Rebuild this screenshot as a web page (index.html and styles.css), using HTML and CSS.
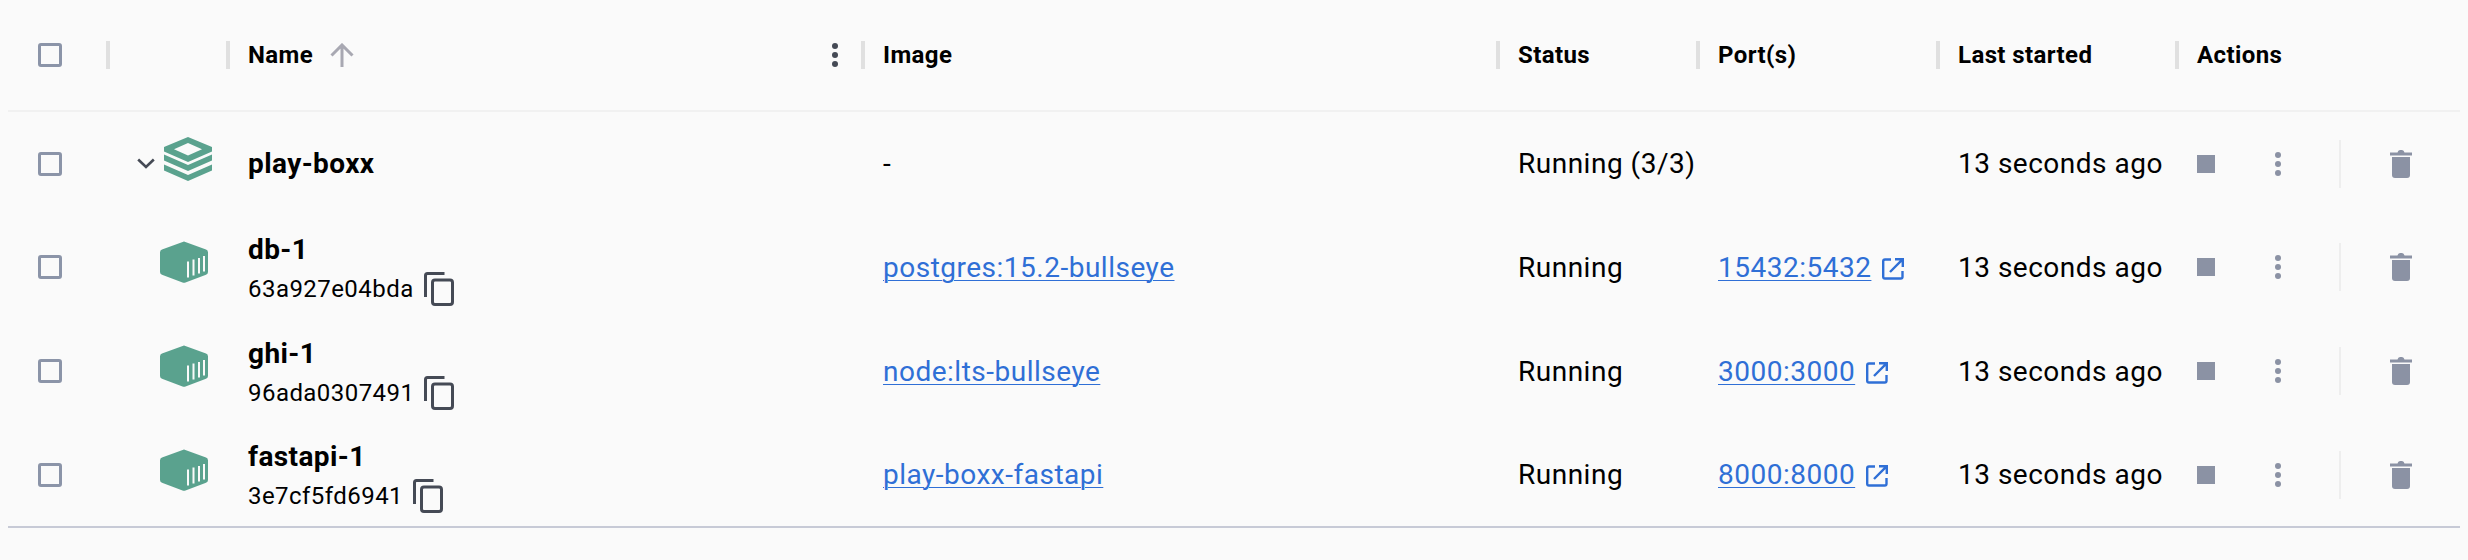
FILE: index.html
```html
<!DOCTYPE html>
<html lang="en">
<head>
    <meta charset="UTF-8">
    <title>Containers</title>
    <link rel="stylesheet" href="styles.css">
</head>
<body>
    <svg class="defs" width="0" height="0">
        <symbol id="i-box" viewBox="0 0 48 42">
            <path d="M24 0.5 46 8.5Q48 9.2 48 11.5V31Q48 33 46 33.8L25.5 41.5Q24 42 22.5 41.5L2 33.8Q0 33 0 31V11.5Q0 9.2 2 8.5Z" fill="#5aa28e"/>
            <path d="M28 20.5V36.5M33.5 18.5V34.5M39 17V32.5M44 15V30.5" stroke="#fafafa" stroke-width="2" fill="none"/>
        </symbol>
        <symbol id="i-copy" viewBox="0 0 30 34">
            <path d="M1.5 25V3.5Q1.5 1.5 3.5 1.5H20.5" stroke="#454a55" stroke-width="3" fill="none"/>
            <rect x="8.5" y="8" width="20" height="24.5" rx="2.5" stroke="#454a55" stroke-width="3" fill="none"/>
        </symbol>
        <symbol id="i-open" viewBox="0 0 22 22">
            <path d="M9 1.5H3Q1.2 1.5 1.2 3.3V18.7Q1.2 20.5 3 20.5H18.7Q20.5 20.5 20.5 18.7V13M13 1.2H20.8V9M20.3 1.7 8 14" stroke="#2f6fd6" stroke-width="2.4" fill="none"/>
        </symbol>
        <symbol id="i-dots" viewBox="0 0 6 24">
            <circle cx="3" cy="3" r="3"/>
            <circle cx="3" cy="12" r="3"/>
            <circle cx="3" cy="21" r="3"/>
        </symbol>
        <symbol id="i-trash" viewBox="0 0 22 28">
            <path d="M0 2.5H7.5Q8 0 10 0H12Q14 0 14.5 2.5H22V5.5H0Z" fill="#8b92a4"/>
            <path d="M2 7H20V25Q20 28 17 28H5Q2 28 2 25Z" fill="#8b92a4"/>
        </symbol>
    </svg>

    <table class="containers">
        <colgroup>
            <col class="col-check">
            <col class="col-icon">
            <col class="col-name">
            <col class="col-image">
            <col class="col-status">
            <col class="col-ports">
            <col class="col-started">
            <col class="col-actions">
        </colgroup>
        <thead>
            <tr>
                <th><span class="checkbox"></span></th>
                <th class="sep"></th>
                <th class="sep">
                    <div class="name-head">
                        <span>Name</span>
                        <svg class="sort-arrow" width="24" height="24" viewBox="0 0 24 24"><path d="M12 24V2M1.5 12.5 12 2 22.5 12.5" stroke="#a8a8b2" stroke-width="3" fill="none"/></svg>
                        <svg class="head-menu" width="6" height="24"><use href="#i-dots"/></svg>
                    </div>
                </th>
                <th class="sep">Image</th>
                <th class="sep">Status</th>
                <th class="sep">Port(s)</th>
                <th class="sep">Last started</th>
                <th class="sep">Actions</th>
            </tr>
        </thead>
        <tbody>
            <tr class="group">
                <td><span class="checkbox"></span></td>
                <td>
                    <div class="icon-cell group-icon">
                        <svg class="chevron" width="18" height="11" viewBox="0 0 18 11"><path d="M1.2 1.5 9 9 16.8 1.5" stroke="#454a55" stroke-width="2.6" fill="none"/></svg>
                        <svg class="stack" width="48" height="44" viewBox="0 0 48 44">
                            <path fill-rule="evenodd" d="M24 0 48 10V14.5L24 25 0 14.5V10ZM24 6 10 12.3 24 18.5 38 12.3Z" fill="#5aa28e"/>
                            <path d="M0 17.5 24 28 48 17.5V23.5L24 34 0 23.5Z" fill="#5aa28e"/>
                            <path d="M0 27.5 24 38 48 27.5V33.5L24 44 0 33.5Z" fill="#5aa28e"/>
                        </svg>
                    </div>
                </td>
                <td class="group-name">play-boxx</td>
                <td>-</td>
                <td class="status-wide">Running (3/3)</td>
                <td></td>
                <td>13 seconds ago</td>
                <td>
                    <div class="actions">
                        <span class="stop"></span>
                        <svg class="row-menu" width="6" height="24"><use href="#i-dots"/></svg>
                        <span class="divider"></span>
                        <svg width="22" height="28"><use href="#i-trash"/></svg>
                    </div>
                </td>
            </tr>
            <tr>
                <td><span class="checkbox"></span></td>
                <td><div class="icon-cell box-icon"><svg width="48" height="42"><use href="#i-box"/></svg></div></td>
                <td>
                    <div class="c-name">db-1</div>
                    <div class="c-id">63a927e04bda <svg width="30" height="34"><use href="#i-copy"/></svg></div>
                </td>
                <td><a href="#">postgres:15.2-bullseye</a></td>
                <td>Running</td>
                <td><a href="#">15432:5432</a><svg class="open" width="22" height="22"><use href="#i-open"/></svg></td>
                <td>13 seconds ago</td>
                <td>
                    <div class="actions">
                        <span class="stop"></span>
                        <svg class="row-menu" width="6" height="24"><use href="#i-dots"/></svg>
                        <span class="divider"></span>
                        <svg width="22" height="28"><use href="#i-trash"/></svg>
                    </div>
                </td>
            </tr>
            <tr>
                <td><span class="checkbox"></span></td>
                <td><div class="icon-cell box-icon"><svg width="48" height="42"><use href="#i-box"/></svg></div></td>
                <td>
                    <div class="c-name">ghi-1</div>
                    <div class="c-id">96ada0307491 <svg width="30" height="34"><use href="#i-copy"/></svg></div>
                </td>
                <td><a href="#">node:lts-bullseye</a></td>
                <td>Running</td>
                <td><a href="#">3000:3000</a><svg class="open" width="22" height="22"><use href="#i-open"/></svg></td>
                <td>13 seconds ago</td>
                <td>
                    <div class="actions">
                        <span class="stop"></span>
                        <svg class="row-menu" width="6" height="24"><use href="#i-dots"/></svg>
                        <span class="divider"></span>
                        <svg width="22" height="28"><use href="#i-trash"/></svg>
                    </div>
                </td>
            </tr>
            <tr>
                <td><span class="checkbox"></span></td>
                <td><div class="icon-cell box-icon"><svg width="48" height="42"><use href="#i-box"/></svg></div></td>
                <td>
                    <div class="c-name">fastapi-1</div>
                    <div class="c-id">3e7cf5fd6941 <svg width="30" height="34"><use href="#i-copy"/></svg></div>
                </td>
                <td><a href="#">play-boxx-fastapi</a></td>
                <td>Running</td>
                <td><a href="#">8000:8000</a><svg class="open" width="22" height="22"><use href="#i-open"/></svg></td>
                <td>13 seconds ago</td>
                <td>
                    <div class="actions">
                        <span class="stop"></span>
                        <svg class="row-menu" width="6" height="24"><use href="#i-dots"/></svg>
                        <span class="divider"></span>
                        <svg width="22" height="28"><use href="#i-trash"/></svg>
                    </div>
                </td>
            </tr>
        </tbody>
    </table>
</body>
</html>
```

FILE: styles.css
```css
html, body {
    height: 100%;
}
body {
    margin: 0;
    padding: 0 8px;
    background-color: #fafafa;
    color: #000;
    font-family: Roboto, "Liberation Sans", sans-serif;
    font-size: 28px;
    letter-spacing: 0.5px;
    overflow: hidden;
}
.defs {
    display: block;
    position: absolute;
}
.containers {
    width: 2452px;
    table-layout: fixed;
    border-collapse: collapse;
    border-bottom: 2px solid #c7cad6;
}
.col-check { width: 100px; }
.col-icon { width: 120px; }
.col-name { width: 635px; }
.col-image { width: 635px; }
.col-status { width: 200px; }
.col-ports { width: 240px; }
.col-started { width: 239px; }
.col-actions { width: 283px; }

th, td {
    padding: 0 0 0 20px;
    text-align: left;
    white-space: nowrap;
}
th:first-child, td:first-child {
    padding-left: 30px;
}
thead tr {
    height: 111px;
    border-bottom: 2px solid #f1f1f1;
}
tbody tr {
    height: 104px;
}
th {
    position: relative;
    font-size: 24px;
    font-weight: 700;
    letter-spacing: 0.4px;
}
.sep::before {
    content: "";
    position: absolute;
    left: -2px;
    top: 41px;
    width: 4px;
    height: 28px;
    background-color: #e0e0e0;
}
.checkbox {
    display: block;
    box-sizing: border-box;
    width: 24px;
    height: 24px;
    border: 3px solid #8b94a8;
    border-radius: 3px;
}
.name-head {
    display: flex;
    align-items: center;
}
.sort-arrow {
    margin-left: 17px;
}
.head-menu {
    margin-left: auto;
    margin-right: 25px;
    fill: #454a55;
}

.icon-cell {
    display: flex;
    justify-content: flex-end;
    padding-right: 20px;
}
td .icon-cell {
    margin-left: -20px;
}
.box-icon {
    padding-bottom: 10px;
}
.group-icon {
    align-items: center;
    gap: 9px;
    padding-right: 16px;
}
.stack {
    margin-bottom: 10px;
}
.group-name {
    font-size: 28px;
    font-weight: 700;
    letter-spacing: 0.4px;
}
.c-name {
    padding-top: 6px;
    font-size: 28px;
    font-weight: 700;
    letter-spacing: 0.4px;
    line-height: 30px;
}
.c-id {
    display: flex;
    align-items: center;
    gap: 10px;
    margin-top: 7px;
    font-size: 24px;
    letter-spacing: 0.45px;
    line-height: 34px;
}
a {
    color: #2f6fd6;
    text-underline-offset: 3px;
    text-decoration-thickness: 1px;
}
.open {
    margin-left: 11px;
    vertical-align: -3px;
}

.actions {
    display: flex;
    align-items: center;
}
.stop {
    width: 18px;
    height: 18px;
    background-color: #8b92a4;
}
.row-menu {
    margin-left: 60px;
    fill: #8b92a4;
}
.divider {
    width: 2px;
    height: 48px;
    margin: 0 49px 0 58px;
    background-color: #eeeeee;
}
```
